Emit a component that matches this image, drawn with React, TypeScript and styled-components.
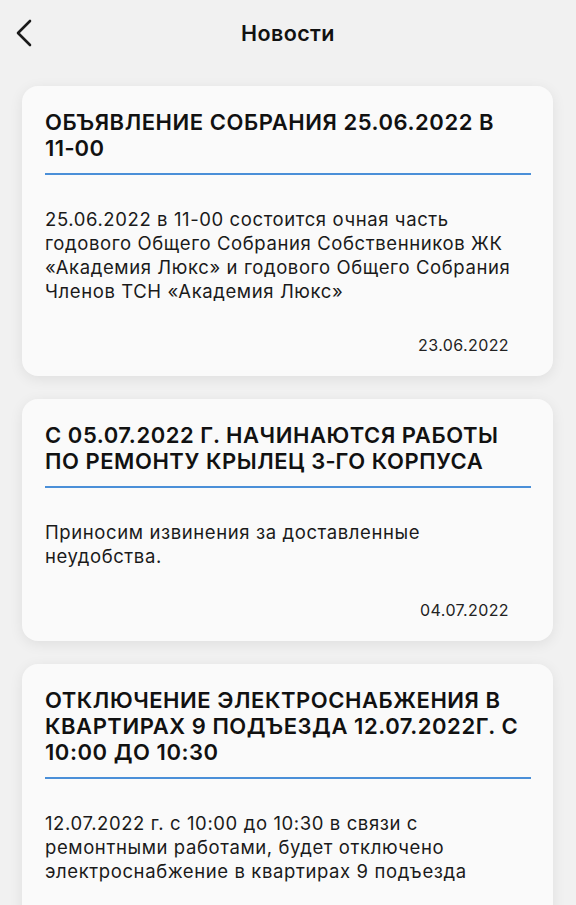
import styled, { createGlobalStyle } from 'styled-components';

type NewsItem = {
  id: number;
  title: string;
  text: string;
  date: string;
};

// в заголовках неразрывный дефис, чтобы время не разрывалось по строкам
const news: NewsItem[] = [
  {
    id: 1,
    title: 'Объявление собрания 25.06.2022 в 11\u201100',
    text: '25.06.2022 в 11-00 состоится очная часть годового Общего Собрания Собственников ЖК «Академия Люкс» и годового Общего Собрания Членов ТСН «Академия Люкс»',
    date: '23.06.2022',
  },
  {
    id: 2,
    title: 'С 05.07.2022 г. начинаются работы по ремонту крылец 3\u2011го корпуса',
    text: 'Приносим извинения за доставленные неудобства.',
    date: '04.07.2022',
  },
  {
    id: 3,
    title: 'Отключение электроснабжения в квартирах 9 подъезда 12.07.2022г. с 10:00 до 10:30',
    text: '12.07.2022 г. с 10:00 до 10:30 в связи с ремонтными работами, будет отключено электроснабжение в квартирах 9 подъезда',
    date: '11.07.2022',
  },
];

//лента новостей
function App() {
  return (
    <>
      <GlobalStyle />
      <Page>
        <Header>
          <BackButton aria-label="Назад">
            <svg width="20" height="30" viewBox="0 0 20 30" fill="none">
              <path
                d="M15 3 L3 15 L15 27"
                stroke="#1a1a1a"
                strokeWidth="2.6"
                strokeLinecap="round"
                strokeLinejoin="round"
              />
            </svg>
          </BackButton>
          <HeaderTitle>Новости</HeaderTitle>
        </Header>
        <List>
          {news.map((item) => (
            <Card key={item.id}>
              <Title>{item.title}</Title>
              <Divider />
              <Text>{item.text}</Text>
              <DateLabel>{item.date}</DateLabel>
            </Card>
          ))}
        </List>
      </Page>
    </>
  );
}

export default App;

const GlobalStyle = createGlobalStyle`
  html, body {
    margin: 0;
    padding: 0;
    background: #f1f1f1;
  }
  body {
    font-family: Inter, "Noto Sans", "Liberation Sans", sans-serif;
    color: #111;
  }
`;

const Page = styled.div`
  width: 576px;
  height: 905px;
  overflow: hidden;
  background: #f1f1f1;
`;

const Header = styled.header`
  position: relative;
  height: 66px;
  display: flex;
  align-items: center;
  justify-content: center;
`;

const BackButton = styled.button`
  position: absolute;
  left: 15px;
  top: 18px;
  padding: 0;
  border: none;
  background: none;
  display: flex;
`;

const HeaderTitle = styled.h1`
  margin: 0;
  font-size: 21.5px;
  font-weight: 600;
  letter-spacing: 0.4px;
  color: #111;
`;

const List = styled.div`
  display: flex;
  flex-direction: column;
  gap: 23px;
  padding: 20px 23px 0 22px;
`;

const Card = styled.article`
  background: #fafafa;
  border-radius: 16px;
  box-shadow: 0 3px 14px rgba(0, 0, 0, 0.08);
  padding: 23px 22px 21px 23px;
`;

const Title = styled.h2`
  margin: 0 0 12px;
  font-size: 22px;
  line-height: 26px;
  font-weight: 600;
  letter-spacing: 0.55px;
  text-transform: uppercase;
  color: #111;
`;

const Divider = styled.div`
  height: 2px;
  background: #4a8fd8;
`;

const Text = styled.p`
  margin: 32px 0 0;
  font-size: 18.5px;
  line-height: 24px;
  letter-spacing: 0.6px;
  color: #1a1a1a;
`;

const DateLabel = styled.div`
  margin-top: 32px;
  padding-right: 22px;
  text-align: right;
  font-size: 16px;
  line-height: 20px;
  letter-spacing: 0.4px;
  color: #222;
`;
